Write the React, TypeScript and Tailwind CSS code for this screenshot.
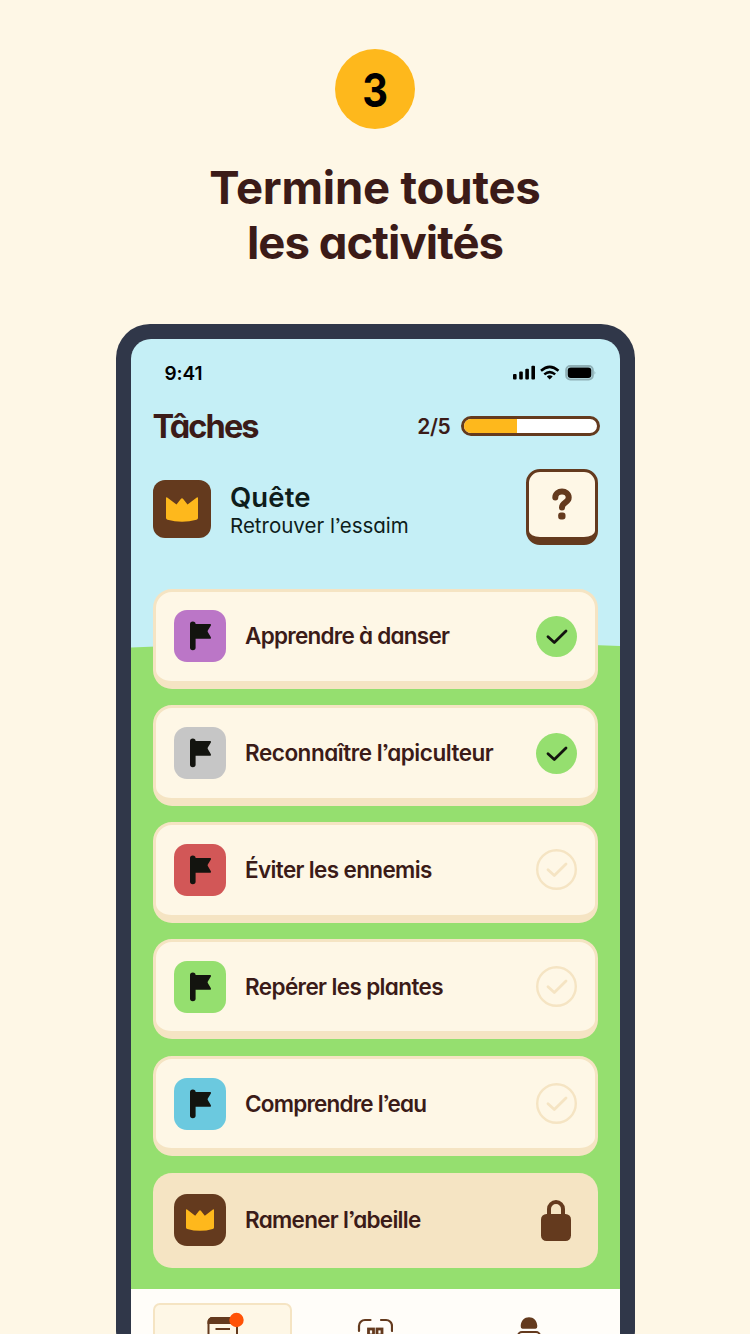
import type { ReactNode } from "react";

function Crown({ className }: { className: string }) {
  return (
    <svg viewBox="0 0 32 25" className={className} fill="#feb81c">
      <path d="M0 1.200Q0 0 1.200.500L10.500 7.600 15 1.800Q16 .800 17 1.800L21.500 7.600 30.800.500Q32 0 32 1.200V21Q32 22.300 30.500 22.700Q16 27 1.500 22.700Q0 22.300 0 21Z" />
    </svg>
  );
}

function Flag() {
  return (
    <svg viewBox="0 0 52 52" className="size-[52px]" fill="#13140f">
      <rect x="16" y="11.500" width="5.600" height="28.800" rx="2.800" />
      <path d="M20 14H36.200Q37.500 14.300 36.900 15.500L33.800 20.600Q33.400 21.300 33.800 22L36.900 27.200Q37.500 28.700 36 28.800H20Z" />
    </svg>
  );
}

function Check({ done }: { done: boolean }) {
  return (
    <svg viewBox="0 0 41 41" className="size-[41px] shrink-0" fill="none">
      {done ? (
        <circle cx="20.500" cy="20.500" r="20.500" fill="#95df6f" />
      ) : (
        <circle cx="20.500" cy="20.500" r="19.300" stroke="#f5e4c3" strokeWidth="2.400" />
      )}
      <path
        d="M12 20.700L18.300 26.500 30 15"
        stroke={done ? "#13140f" : "#f5e4c3"}
        strokeWidth="2.800"
        strokeLinecap="round"
        strokeLinejoin="round"
      />
    </svg>
  );
}

function Lock() {
  return (
    <svg viewBox="0 0 30 41" className="mr-[5.500px] h-[41px] w-[30px] shrink-0">
      <path d="M8 16V9a7 7 0 0 1 14 0V16" fill="none" stroke="#643a1e" strokeWidth="4" />
      <rect y="14" width="30" height="27" rx="5.500" fill="#643a1e" />
    </svg>
  );
}

const tasks = [
  { label: "Apprendre à danser", tile: "bg-[#bb76c7]", done: true, tracking: "tracking-[-0.740px]" },
  { label: "Reconnaître l’apiculteur", tile: "bg-[#c6c6c6]", done: true, tracking: "tracking-[-0.470px]" },
  { label: "Éviter les ennemis", tile: "bg-[#d25757]", done: false, tracking: "tracking-[-0.640px]" },
  { label: "Repérer les plantes", tile: "bg-[#95df6f]", done: false, tracking: "tracking-[-0.620px]" },
  { label: "Comprendre l’eau", tile: "bg-[#6bc9df]", done: false, tracking: "tracking-[-0.800px]" },
];

function Label({ tracking, children }: { tracking: string; children: ReactNode }) {
  return (
    <span className={`ml-[19px] flex-1 whitespace-nowrap text-[22.500px] leading-7 font-semibold text-[#3b1b18] ${tracking}`}>
      {children}
    </span>
  );
}

function StatusIcons() {
  return (
    <svg viewBox="0 0 84 16" className="h-4 w-[84px]">
      <rect x="0" y="9" width="3.600" height="5.500" rx="1" />
      <rect x="6.200" y="6.500" width="3.600" height="8" rx="1" />
      <rect x="12.300" y="3.800" width="3.600" height="10.700" rx="1" />
      <rect x="18.400" y=".800" width="3.600" height="13.700" rx="1" />
      <g fill="none" stroke="#000" strokeWidth="2.500">
        <path d="M28 5.800Q36.700-2 45.500 5.800" />
        <path d="M31.300 9.400Q36.700 4.800 42.200 9.400" />
      </g>
      <path d="M33.800 11.500Q36.700 9 39.700 11.500L36.700 14.500Z" />
      <rect x="53.200" y="1.100" width="26.600" height="13.400" rx="4" fill="none" stroke="#8fb0b6" strokeWidth="2" />
      <rect x="54.700" y="2.600" width="23.600" height="10.400" rx="3" />
      <path d="M81.500 5.800Q83.300 7.800 81.500 9.800Z" fill="#8fb0b6" />
    </svg>
  );
}

export default function App() {
  return (
    <main className="flex h-[1334px] w-[750px] flex-col items-center overflow-hidden bg-[#fef7e6] pt-[49px] font-[Inter,'Noto_Sans',sans-serif] [font-feature-settings:'cv11','ss03']">
      <div className="flex size-20 shrink-0 items-center justify-center rounded-full bg-[#feb81c] text-[47px] leading-none font-bold text-black">
        <span className="scale-x-85">3</span>
      </div>
      <h1 className="mt-[31px] h-[164px] shrink-0 text-center text-[45.500px] leading-[55px] font-bold text-[#3b1b18]">
        <span className="tracking-[-0.200px]">Termine toutes</span>
        <br />
        <span className="tracking-[-0.950px]">les activités</span>
      </h1>
      <div className="h-[1040px] w-[519px] shrink-0 rounded-[34px] bg-[#303749] p-[15px]">
        <div className="relative flex h-[1010px] flex-col overflow-hidden rounded-t-[20px] bg-[#c5eff6]">
          <svg viewBox="0 0 489 700" className="absolute top-[300px] left-0 h-[700px] w-[489px]" fill="#95df6f">
            <path d="M0 8.500Q245-3 489 7V700H0Z" />
          </svg>
          <div className="relative flex h-[950px] shrink-0 flex-col px-[22px]">
            <div className="flex h-[68px] items-center justify-between pl-[12px] pr-[1px]">
              <span className="mt-[2px] text-[19px] font-semibold tracking-[-0.100px] text-black">9:41</span>
              <StatusIcons />
            </div>
            <div className="flex h-[38px] items-center">
              <h2 className="mt-[2px] text-[32.500px] leading-none font-bold tracking-[-1.900px] text-[#3b1b18]">Tâches</h2>
              <span className="ml-auto text-[21px] leading-none font-semibold tracking-[-0.300px] text-[#3b1b18]">2/5</span>
              <div className="mt-[-1px] mr-[-2px] ml-[10px] flex h-[20px] w-[139px] overflow-hidden rounded-full border-3 border-[#643a1e] bg-white">
                <div className="w-[40%] bg-[#feb81c]" />
              </div>
            </div>
            <div className="mt-[24px] flex h-[76px] items-center">
              <div className="mb-[-4px] flex size-[58px] items-center justify-center rounded-[12px] bg-[#643a1e]">
                <Crown className="h-[25px] w-[32px]" />
              </div>
              <div className="mt-[8px] ml-[19.500px] flex flex-col">
                <span className="text-[27.500px] leading-[29px] font-semibold tracking-[0.100px] text-[#0e1d1b]">Quête</span>
                <span className="text-[20.500px] leading-[27px] text-[#0e1d1b]">Retrouver l’essaim</span>
              </div>
              <div className="ml-auto flex h-[76px] w-[72px] items-center justify-center rounded-[14px] border-3 border-b-[8px] border-[#643a1e] bg-[#fef7e6]">
                <svg viewBox="0 0 20 32" className="mt-[-2px] h-[32px] w-[20px]" fill="none">
                  <path d="M3.300 9.500C3.300 1.500 16.700 1.500 16.700 9.500C16.700 15 10 14 10 19.500" stroke="#643a1e" strokeWidth="6" strokeLinecap="round" />
                  <rect x="6.200" y="24.500" width="7.300" height="7" rx="2.700" fill="#643a1e" />
                </svg>
              </div>
            </div>
            <div className="mt-[43.700px] flex flex-col gap-[16.400px]">
              {tasks.map((t) => (
                <div
                  key={t.label}
                  className="flex h-[100.400px] items-center rounded-[19px] border-3 border-b-[8px] border-[#f5e4c3] bg-[#fef7e6] pr-[17.700px] pl-[18.500px]"
                >
                  <div className={`size-[52px] shrink-0 rounded-[13px] ${t.tile}`}>
                    <Flag />
                  </div>
                  <Label tracking={t.tracking}>{t.label}</Label>
                  <Check done={t.done} />
                </div>
              ))}
              <div className="flex h-[95px] items-center rounded-[19px] bg-[#f5e4c3] px-[21.500px]">
                <div className="flex size-[52px] shrink-0 items-center justify-center rounded-[13px] bg-[#643a1e]">
                  <Crown className="h-[22px] w-[28px]" />
                </div>
                <Label tracking="tracking-[-0.700px]">Ramener l’abeille</Label>
                <Lock />
              </div>
            </div>
          </div>
          <nav className="relative flex flex-1 gap-[14px] bg-[#fffdf9] px-[22px] pt-[13.500px]">
            <div className="flex h-[80px] w-[139px] justify-center rounded-[7px] border-2 border-[#f5e4c3] bg-[#fef7e6] pt-[7px]">
              <svg viewBox="0 0 40 40" className="h-10 w-10 overflow-visible" fill="none" stroke="#643a1e" strokeWidth="2">
                <rect x="6.500" y="6" width="28.500" height="33" rx="4" fill="#fef7e6" />
                <path d="M6.500 11V10a4 4 0 0 1 4-4H31a4 4 0 0 1 4 4V11Z" fill="#643a1e" />
                <path d="M13.500 17H28" />
                <circle cx="34.500" cy="8" r="7.200" fill="#ff5206" stroke="none" />
              </svg>
            </div>
            <div className="flex w-[139px] justify-center pt-[15px]">
              <svg viewBox="0 0 36 36" className="size-9" fill="none" stroke="#643a1e" strokeWidth="2.200">
                <path d="M2 13V8a6 6 0 0 1 6-6H13.500M24 2H29a6 6 0 0 1 6 6V13" strokeLinecap="round" />
                <rect x="11.500" y="11" width="5" height="6" strokeWidth="2.800" />
                <rect x="20" y="11" width="5" height="6" strokeWidth="2.800" />
              </svg>
            </div>
            <div className="flex w-[139px] justify-center pt-[13px]">
              <svg viewBox="0 0 30 40" className="ml-[1px] h-10 w-[30px]">
                <path d="M8.500 12.700Q6.500 12.500 6.700 10C7 4.500 10.500 1.300 15 1.300S23 4.500 23.300 10Q23.500 12.500 21.500 12.700Z" fill="#643a1e" />
                <rect x="4" y="16" width="22" height="20" rx="4" fill="none" stroke="#643a1e" strokeWidth="2" />
              </svg>
            </div>
          </nav>
        </div>
      </div>
    </main>
  );
}
